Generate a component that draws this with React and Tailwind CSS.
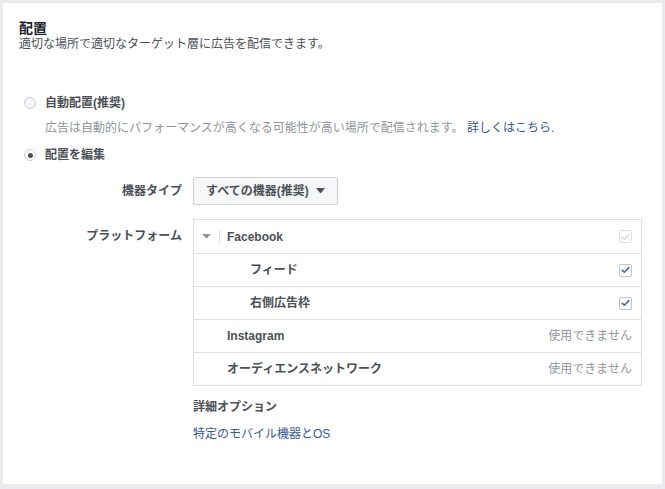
import React from "react";

const font = { fontFamily: '"Liberation Sans", "Noto Sans CJK JP", sans-serif' };

function Check({ disabled }) {
  return (
    <div className={`w-[13px] h-[13px] rounded-[2px] border flex items-center justify-center bg-white ${disabled ? "border-[#dddfe2]" : "border-[#bec2c9]"}`}>
      <svg width="9" height="8" viewBox="0 0 9 8">
        <path d="M1.2 4.3 L3.4 6.2 L7.8 1.6" fill="none" stroke={disabled ? "#d5d7db" : "#4267b2"} strokeWidth="1.6" strokeLinecap="round" strokeLinejoin="round" />
      </svg>
    </div>
  );
}

function Row({ children, right, first }) {
  return (
    <div className={`h-[33px] flex items-center pr-[9px] ${first ? "" : "border-t border-[#dddfe2]"}`}>
      <div className="flex-1 flex items-center min-w-0">{children}</div>
      {right}
    </div>
  );
}

export default function App() {
  return (
    <div className="w-[665px] h-[489px] bg-[#e9ebee] p-[3px] pr-[3px]" style={font}>
      <div className="w-[659px] h-[481px] bg-white pl-[16px] pt-[16px] text-[12px] text-[#4b4f56]">
        <div className="text-[14px] font-bold text-[#1d2129] leading-[18px]">配置</div>
        <div className="text-[12px] text-[#4b4f56] leading-[16px] -mt-[1px]">適切な場所で適切なターゲット層に広告を配信できます。</div>

        <div className="mt-[43px] pl-[5px]">
          <div className="flex items-center h-[16px]">
            <div className="w-[12px] h-[12px] rounded-full border border-[#ccd0d5] bg-[#f5f6f7]" />
            <span className="ml-[9px] font-bold text-[#4b4f56]">自動配置(推奨)</span>
          </div>
          <div className="ml-[21px] mt-[9px] text-[#90949c] leading-[16px]">
            広告は自動的にパフォーマンスが高くなる可能性が高い場所で配信されます。 <span className="text-[#365899]">詳しくはこちら.</span>
          </div>
          <div className="flex items-center h-[16px] mt-[11px]">
            <div className="w-[12px] h-[12px] rounded-full border border-[#ccd0d5] bg-white flex items-center justify-center">
              <div className="w-[5px] h-[5px] rounded-full bg-[#4b4f56]" />
            </div>
            <span className="ml-[9px] font-bold text-[#4b4f56]">配置を編集</span>
          </div>
        </div>

        <div className="mt-[14px] flex items-center">
          <div className="w-[163px] text-right font-bold text-[#4b4f56]">機器タイプ</div>
          <div className="ml-[11px] h-[28px] px-[12px] flex items-center border border-[#ced0d4] rounded-[2px] bg-[#f6f7f9] font-bold text-[#4b4f56]">
            すべての機器(推奨)
            <svg className="ml-[7px]" width="9" height="6" viewBox="0 0 9 6"><path d="M0 0 H9 L4.5 5.5 Z" fill="#4b4f56" /></svg>
          </div>
        </div>

        <div className="mt-[14px] flex items-start">
          <div className="w-[163px] text-right font-bold text-[#4b4f56] mt-[8px]">プラットフォーム</div>
          <div className="ml-[11px] w-[449px]">
            <div className="border border-[#dddfe2] font-bold text-[#4b4f56]">
              <Row first right={<Check disabled />}>
                <svg className="ml-[8px]" width="9" height="5" viewBox="0 0 9 5"><path d="M0 0 H9 L4.5 4.5 Z" fill="#90949c" /></svg>
                <div className="ml-[8px] w-px h-[14px] bg-[#dddfe2]" />
                <span className="ml-[7px]">Facebook</span>
              </Row>
              <Row right={<Check />}><span className="ml-[56px]">フィード</span></Row>
              <Row right={<Check />}><span className="ml-[56px]">右側広告枠</span></Row>
              <Row right={<span className="font-normal text-[#90949c]">使用できません</span>}><span className="ml-[33px]">Instagram</span></Row>
              <Row right={<span className="font-normal text-[#90949c]">使用できません</span>}><span className="ml-[33px]">オーディエンスネットワーク</span></Row>
            </div>
            <div className="mt-[13px] font-bold text-[#4b4f56] leading-[16px]">詳細オプション</div>
            <div className="mt-[11px] text-[#365899] leading-[16px]">特定のモバイル機器とOS</div>
          </div>
        </div>
      </div>
    </div>
  );
}
